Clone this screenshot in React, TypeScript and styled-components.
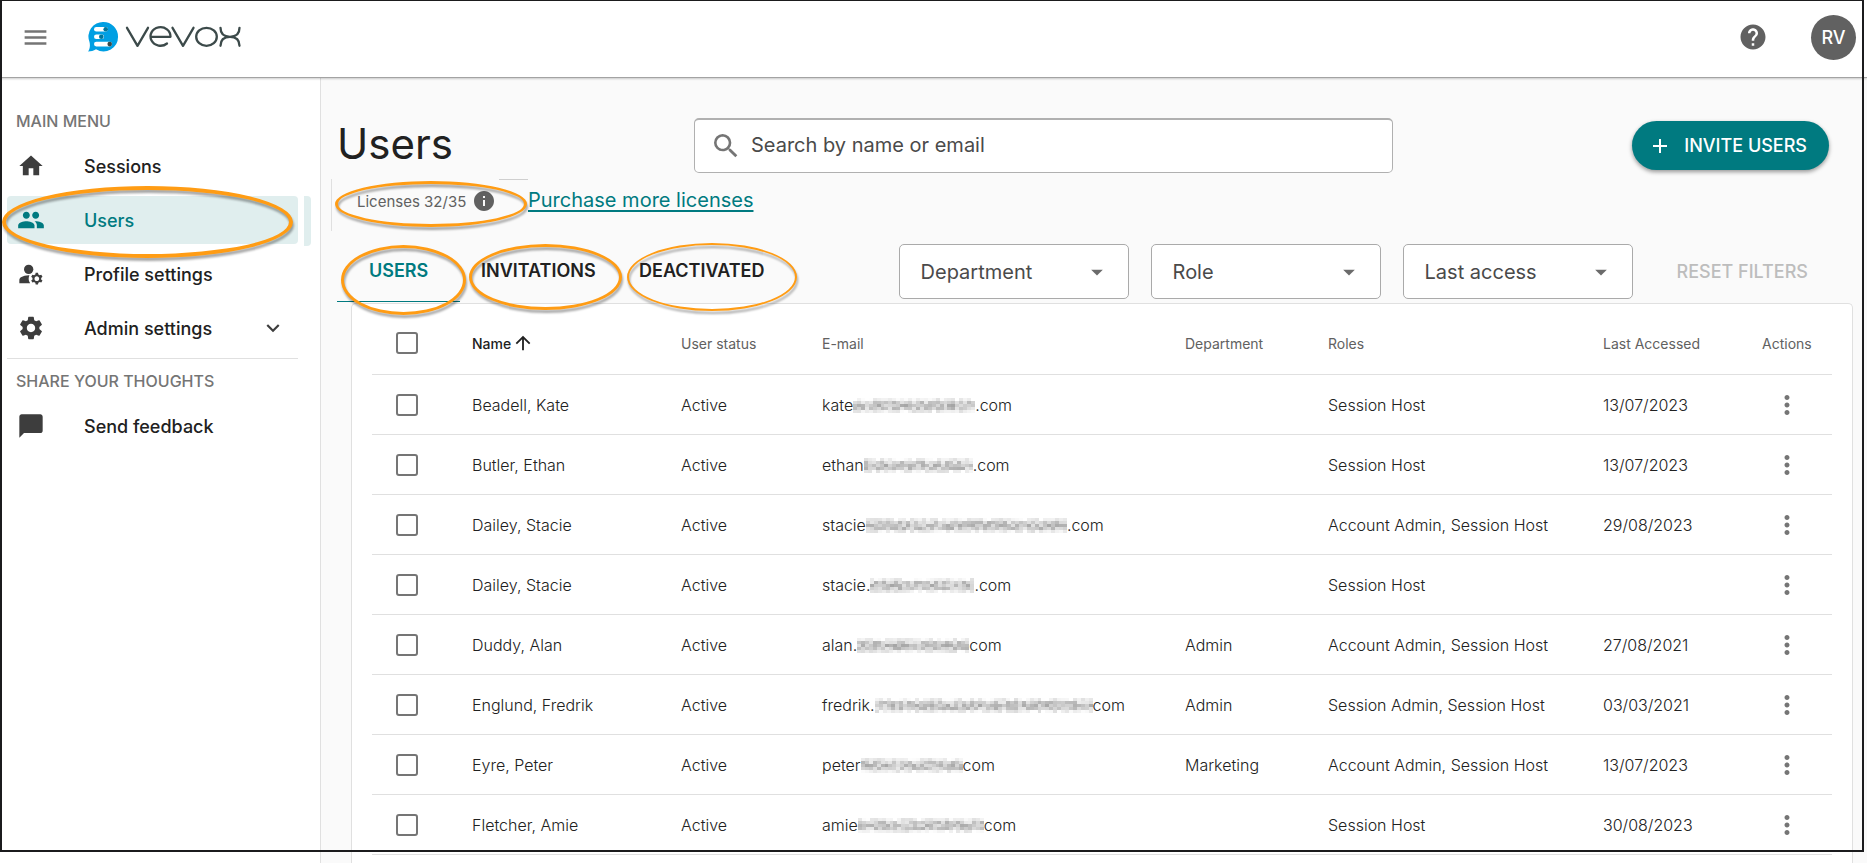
import React from 'react';
import styled, { createGlobalStyle } from 'styled-components';
import {
  MdHome, MdPeople, MdManageAccounts, MdSettings, MdChatBubble, MdExpandMore,
  MdMenu, MdHelp, MdSearch, MdAdd, MdInfo, MdArrowUpward, MdMoreVert, MdArrowDropDown,
} from 'react-icons/md';

const teal = '#007a80';
const orange = '#ff9c14';
const line = '#e0e0e0';

const GlobalStyle = createGlobalStyle`
  *, *::before, *::after { box-sizing: border-box; }
  body { margin: 0; background: #fff; color: #212121; font-family: Inter, Lato, "Liberation Sans", sans-serif; font-size: 16px; }
  button, input, select { font: inherit; color: inherit; }
  button { border: 0; padding: 0; background: none; cursor: pointer; }
  h1, h2 { margin: 0; font-weight: 400; }
  svg { display: block; flex: none; }
`;

const Page = styled.div`
  position: relative;
  display: flex;
  flex-direction: column;
  min-height: 100vh;
  overflow: hidden;
`;

const Frame = styled.div`
  position: absolute;
  inset: 0 3px 11px 0;
  border: 2px solid #1b1b1d;
  border-top-width: 1px;
  pointer-events: none;
  z-index: 5;
`;

const Header = styled.header`
  display: flex;
  align-items: center;
  height: 78px;
  padding: 0 11px 3px 21px;
  background: #fff;
  border-bottom: 1px solid #a3a3a3;
  box-shadow: 0 1px 2px rgba(0, 0, 0, 0.2);
  z-index: 1;
`;

const MenuButton = styled.button`
  color: #757575;
  margin-right: 38px;
`;

const Logo = styled.a`
  display: flex;
  align-items: center;
  margin-right: auto;
`;

const HelpButton = styled.button`
  color: #616161;
  margin-right: 43px;
`;

const Avatar = styled.button`
  width: 45px;
  height: 45px;
  border-radius: 50%;
  background: #616161;
  color: #fff;
  font-size: 18px;
  font-weight: 500;
`;

const Body = styled.div`
  display: flex;
  flex: 1;
`;

const Sidebar = styled.nav`
  flex: none;
  width: 321px;
  padding: 29px 22px 0 7px;
  border-right: 1px solid ${line};
  background: #fff;
`;

const SectionTitle = styled.h2`
  height: 32px;
  padding: 4px 9px 0;
  font-size: 16px;
  line-height: 20px;
  font-weight: 500;
  color: #757575;
`;

const NavList = styled.ul`
  margin: 0;
  padding: 3px 0 0;
  list-style: none;
`;

const NavItem = styled.li`
  position: relative;
  margin-bottom: 6px;
`;

const NavLink = styled.a<{ $active?: boolean }>`
  display: flex;
  align-items: center;
  height: 48px;
  padding: 0 12px 0 10px;
  border-radius: 4px;
  text-decoration: none;
  font-size: 18px;
  font-weight: 500;
  color: ${(p) => (p.$active ? teal : '#212121')};
  background: ${(p) => (p.$active ? '#e0eeee' : 'transparent')};
  svg { color: ${(p) => (p.$active ? teal : '#3d3d3d')}; }
`;

const NavLabel = styled.span`
  flex: 1;
  padding-left: 39px;
`;

const ScrollMark = styled.span`
  position: absolute;
  top: 0;
  left: 297px;
  width: 7px;
  height: 50px;
  border-radius: 0 4px 4px 0;
  background: #e0eeee;
`;

const Divider = styled.hr`
  margin: 0 0 8px;
  border: 0;
  border-top: 1px solid ${line};
`;

const Ring = styled.span<{ $inset: string; $stroke?: number }>`
  position: absolute;
  inset: ${(p) => p.$inset};
  border: ${(p) => p.$stroke ?? 3}px solid ${orange};
  border-radius: 50%;
  filter: drop-shadow(1px 3px 1px rgba(0, 0, 0, 0.35));
  pointer-events: none;
  z-index: 2;
`;

const Main = styled.main`
  display: flex;
  flex-direction: column;
  flex: 1;
  min-width: 0;
  padding: 40px 14px 0 10px;
  background: #fafafa;
`;

const TopRow = styled.div`
  display: grid;
  grid-template-columns: 357px minmax(0, 699px) 1fr;
  align-items: center;
  padding: 0 24px 0 6px;
`;

const Title = styled.h1`
  padding-bottom: 4px;
  font-size: 42px;
  line-height: 48px;
`;

const SearchBox = styled.label`
  display: flex;
  align-items: center;
  height: 55px;
  padding: 0 15px;
  border: 1px solid #b0b0b0;
  border-top-width: 2px;
  border-radius: 5px;
  background: #fff;
  color: #757575;
`;

const SearchInput = styled.input`
  flex: 1;
  min-width: 0;
  padding: 0 0 2px 9px;
  border: 0;
  outline: 0;
  background: none;
  font-size: 20px;
  &::placeholder { color: #4a4a4a; opacity: 1; }
`;

const InviteButton = styled.button`
  display: flex;
  align-items: center;
  justify-self: end;
  gap: 12px;
  height: 49px;
  padding: 0 22px 0 16px;
  border-radius: 25px;
  background: ${teal};
  color: #fff;
  font-size: 18px;
  font-weight: 500;
  box-shadow: 0 2px 4px rgba(0, 0, 0, 0.4);
`;

const LicenseRow = styled.div`
  display: flex;
  margin-top: 6px;
  height: 52px;
`;

const LicenseBox = styled.div`
  position: relative;
  display: flex;
  align-items: center;
  gap: 6px;
  width: 197px;
  padding: 0 0 8px 25px;
  border-left: 1px solid ${line};
  font-size: 15px;
  color: #616161;
  &::after {
    content: "";
    position: absolute;
    top: 0;
    right: 0;
    width: 29px;
    border-top: 1px solid #cfcfcf;
  }
`;

const PurchaseLink = styled.a`
  padding-top: 9px;
  font-size: 20px;
  line-height: 24px;
  color: ${teal};
  text-decoration-thickness: 2px;
  text-underline-offset: 3px;
  text-decoration-skip-ink: none;
`;

const ToolRow = styled.div`
  display: flex;
  align-items: flex-start;
  justify-content: space-between;
  margin-top: 13px;
  padding: 0 23px 0 6px;
`;

const Tabs = styled.div`
  display: flex;
`;

const Tab = styled.button<{ $active?: boolean; $width: number }>`
  position: relative;
  width: ${(p) => p.$width}px;
  height: 58px;
  padding: 0 0 4px ${(p) => (p.$active ? 32 : 21)}px;
  border-bottom: 1px solid ${(p) => (p.$active ? teal : 'transparent')};
  text-align: left;
  font-size: 18px;
  font-weight: 600;
  color: ${(p) => (p.$active ? teal : '#212121')};
`;

const Filters = styled.div`
  display: flex;
  gap: 22px;
  height: 59px;
`;

const SelectBox = styled.div`
  position: relative;
  width: 230px;
  height: 55px;
  svg {
    position: absolute;
    right: 18px;
    top: 14px;
    color: #6b6b6b;
    pointer-events: none;
  }
`;

const Select = styled.select`
  width: 100%;
  height: 100%;
  padding: 0 48px 0 21px;
  appearance: none;
  border: 1px solid #aaa;
  border-radius: 5px;
  background: #fff;
  font-size: 20px;
  color: #4a4a4a;
`;

const ResetButton = styled.button`
  height: 55px;
  padding: 0 22px;
  font-size: 18px;
  font-weight: 500;
  color: #bdbdbd;
`;

const Card = styled.section`
  flex: 1;
  margin-left: 20px;
  padding: 0 20px;
  border: 1px solid ${line};
  border-bottom: 0;
  border-radius: 5px 5px 0 0;
  background: #fff;
`;

const Table = styled.table`
  width: 100%;
  border-collapse: collapse;
  table-layout: fixed;
`;

const HeadCell = styled.th<{ $width?: number; $sorted?: boolean }>`
  width: ${(p) => (p.$width ? `${p.$width}px` : 'auto')};
  height: 70px;
  padding: 9px 0 0;
  border-bottom: 1px solid ${line};
  text-align: left;
  white-space: nowrap;
  font-size: 14px;
  font-weight: ${(p) => (p.$sorted ? 500 : 400)};
  color: ${(p) => (p.$sorted ? '#212121' : '#616161')};
`;

const SortButton = styled.button`
  display: flex;
  align-items: center;
  gap: 1px;
`;

const Cell = styled.td`
  height: 60px;
  padding: 2px 0 0;
  border-bottom: 1px solid ${line};
  white-space: nowrap;
  font-weight: 300;
`;

const Check = styled.input`
  display: block;
  width: 22px;
  height: 22px;
  margin: 0 0 0 24px;
  appearance: none;
  border: 2px solid #757575;
  border-radius: 3px;
  background: #fff;
`;

const Email = styled.span`
  display: flex;
  align-items: center;
`;

const MoreButton = styled.button`
  display: block;
  margin-left: 10px;
  color: #757575;
`;

const cell = 4;

/* Pixelated patch that hides the private part of an address. */
function Redaction({ width, seed }: { width: number; seed: number }) {
  const cols = Math.round(width / cell);
  const bases = [240, 204, 192, 200, 236];
  const cells: React.ReactNode[] = [];
  for (let c = 0; c < cols; c++) {
    for (let r = 0; r < bases.length; r++) {
      const n = Math.abs(Math.sin((c + 1) * 12.9 + (r + 1) * 78.2 + seed * 37.7) * 43758.5) % 1;
      const spread = r === 0 || r === 4 ? 36 : 60;
      const v = Math.min(255, Math.round(bases[r] + (n - 0.45) * spread));
      cells.push(
        <rect key={`${c}-${r}`} x={c * cell} y={r * 3} width={cell} height={3} fill={`rgb(${v},${v},${v})`} />,
      );
    }
  }
  return (
    <svg width={width} height={15} viewBox={`0 0 ${cols * cell} 15`} preserveAspectRatio="none" shapeRendering="crispEdges" aria-hidden>
      {cells}
    </svg>
  );
}

const users = [
  { name: 'Beadell, Kate', start: 'kate', hidden: 122, end: '.com', dept: '', roles: 'Session Host', last: '13/07/2023' },
  { name: 'Butler, Ethan', start: 'ethan', hidden: 109, end: '.com', dept: '', roles: 'Session Host', last: '13/07/2023' },
  { name: 'Dailey, Stacie', start: 'stacie', hidden: 201, end: '.com', dept: '', roles: 'Account Admin, Session Host', last: '29/08/2023' },
  { name: 'Dailey, Stacie', start: 'stacie.', hidden: 104, end: '.com', dept: '', roles: 'Session Host', last: '' },
  { name: 'Duddy, Alan', start: 'alan.', hidden: 112, end: 'com', dept: 'Admin', roles: 'Account Admin, Session Host', last: '27/08/2021' },
  { name: 'Englund, Fredrik', start: 'fredrik.', hidden: 218, end: 'com', dept: 'Admin', roles: 'Session Admin, Session Host', last: '03/03/2021' },
  { name: 'Eyre, Peter', start: 'peter', hidden: 102, end: 'com', dept: 'Marketing', roles: 'Account Admin, Session Host', last: '13/07/2023' },
  { name: 'Fletcher, Amie', start: 'amie', hidden: 126, end: 'com', dept: '', roles: 'Session Host', last: '30/08/2023' },
];

function VevoxLogo() {
  return (
    <svg width="154" height="32" viewBox="0 0 154 32" role="img" aria-label="vevox">
      <path d="M15.500 1A14.500 14.500 0 0 1 30 15.500A14.500 14.500 0 0 1 8 28.300C5.500 29.800 3 30.500 0 30.500C1.500 28.500 2.500 25.500 1.500 21A14.500 14.500 0 0 1 15.500 1Z" fill="#009fe3" />
      <g fill="#fff">
        <rect x="6" y="6" width="14" height="4.600" rx="2.300" />
        <rect x="6" y="13.400" width="10" height="4.600" rx="2.300" />
        <rect x="6" y="20.800" width="18" height="4.600" rx="2.300" />
      </g>
      <circle cx="17.700" cy="8.300" r="2.300" fill="#00769b" />
      <circle cx="13.300" cy="15.700" r="2.300" fill="#00769b" />
      <circle cx="21.700" cy="23.100" r="2.300" fill="#3c4a4a" />
      <g fill="none" stroke="#3c4a4a" strokeWidth="2.300" strokeLinecap="round" strokeLinejoin="round">
        <path d="M39 6.800L49.500 24.800L60 6.800" />
        <path d="M62.500 15.800H82.500A10 9.300 0 1 0 79 22.500" />
        <path d="M84.500 6.800L95 24.800L105.500 6.800" />
        <ellipse cx="118.500" cy="15.800" rx="10.300" ry="9" />
        <path d="M132.500 6.800C132.500 13 136 15.800 142 15.800S151.500 13 151.500 6.800M132.500 24.800C132.500 18.600 136 15.800 142 15.800S151.500 18.600 151.500 24.800" />
      </g>
    </svg>
  );
}

function Filter({ label }: { label: string }) {
  return (
    <SelectBox>
      <Select aria-label={label} defaultValue="">
        <option value="">{label}</option>
      </Select>
      <MdArrowDropDown size={28} />
    </SelectBox>
  );
}

export default function App() {
  return (
    <Page>
      <GlobalStyle />
      <Frame />
      <Header>
        <MenuButton aria-label="Toggle menu"><MdMenu size={29} /></MenuButton>
        <Logo href="#"><VevoxLogo /></Logo>
        <HelpButton aria-label="Help"><MdHelp size={30} /></HelpButton>
        <Avatar>RV</Avatar>
      </Header>
      <Body>
        <Sidebar>
          <SectionTitle>MAIN MENU</SectionTitle>
          <NavList>
            <NavItem>
              <NavLink href="#"><MdHome size={28} /><NavLabel>Sessions</NavLabel></NavLink>
            </NavItem>
            <NavItem>
              <NavLink href="#" $active><MdPeople size={28} /><NavLabel>Users</NavLabel></NavLink>
              <ScrollMark />
              <Ring $inset="-10px 5px -14px -5px" $stroke={4} />
            </NavItem>
            <NavItem>
              <NavLink href="#"><MdManageAccounts size={28} /><NavLabel>Profile settings</NavLabel></NavLink>
            </NavItem>
            <NavItem>
              <NavLink href="#">
                <MdSettings size={28} /><NavLabel>Admin settings</NavLabel><MdExpandMore size={26} />
              </NavLink>
            </NavItem>
          </NavList>
          <Divider />
          <SectionTitle>SHARE YOUR THOUGHTS</SectionTitle>
          <NavList>
            <NavItem>
              <NavLink href="#"><MdChatBubble size={28} /><NavLabel>Send feedback</NavLabel></NavLink>
            </NavItem>
          </NavList>
        </Sidebar>
        <Main>
          <TopRow>
            <Title>Users</Title>
            <SearchBox>
              <MdSearch size={32} />
              <SearchInput type="search" aria-label="Search by name or email" placeholder="Search by name or email" />
            </SearchBox>
            <InviteButton><MdAdd size={24} />INVITE USERS</InviteButton>
          </TopRow>
          <LicenseRow>
            <LicenseBox>
              Licenses 32/35
              <MdInfo size={24} />
              <Ring $inset="2px 1px 4px 3px" />
            </LicenseBox>
            <PurchaseLink href="#">Purchase more licenses</PurchaseLink>
          </LicenseRow>
          <ToolRow>
            <Tabs role="tablist">
              <Tab role="tab" aria-selected $active $width={123}>
                USERS<Ring $inset="1px -6px -14px 4px" />
              </Tab>
              <Tab role="tab" aria-selected={false} $width={158}>
                INVITATIONS<Ring $inset="0 -4px -9px 9px" />
              </Tab>
              <Tab role="tab" aria-selected={false} $width={170}>
                DEACTIVATED<Ring $inset="-1px -9px -10px 9px" $stroke={2} />
              </Tab>
            </Tabs>
            <Filters>
              <Filter label="Department" />
              <Filter label="Role" />
              <Filter label="Last access" />
              <ResetButton>RESET FILTERS</ResetButton>
            </Filters>
          </ToolRow>
          <Card>
            <Table>
              <thead>
                <tr>
                  <HeadCell $width={100}><Check type="checkbox" aria-label="Select all users" /></HeadCell>
                  <HeadCell $width={209} $sorted aria-sort="ascending">
                    <SortButton>Name<MdArrowUpward size={22} /></SortButton>
                  </HeadCell>
                  <HeadCell $width={141}>User status</HeadCell>
                  <HeadCell>E-mail</HeadCell>
                  <HeadCell $width={143}>Department</HeadCell>
                  <HeadCell $width={275}>Roles</HeadCell>
                  <HeadCell $width={159}>Last Accessed</HeadCell>
                  <HeadCell $width={70}>Actions</HeadCell>
                </tr>
              </thead>
              <tbody>
                {users.map((u, i) => (
                  <tr key={i}>
                    <Cell><Check type="checkbox" aria-label={`Select ${u.name}`} /></Cell>
                    <Cell>{u.name}</Cell>
                    <Cell>Active</Cell>
                    <Cell><Email>{u.start}<Redaction width={u.hidden} seed={i + 1} />{u.end}</Email></Cell>
                    <Cell>{u.dept}</Cell>
                    <Cell>{u.roles}</Cell>
                    <Cell>{u.last}</Cell>
                    <Cell><MoreButton aria-label={`Actions for ${u.name}`}><MdMoreVert size={30} /></MoreButton></Cell>
                  </tr>
                ))}
              </tbody>
            </Table>
          </Card>
        </Main>
      </Body>
    </Page>
  );
}
